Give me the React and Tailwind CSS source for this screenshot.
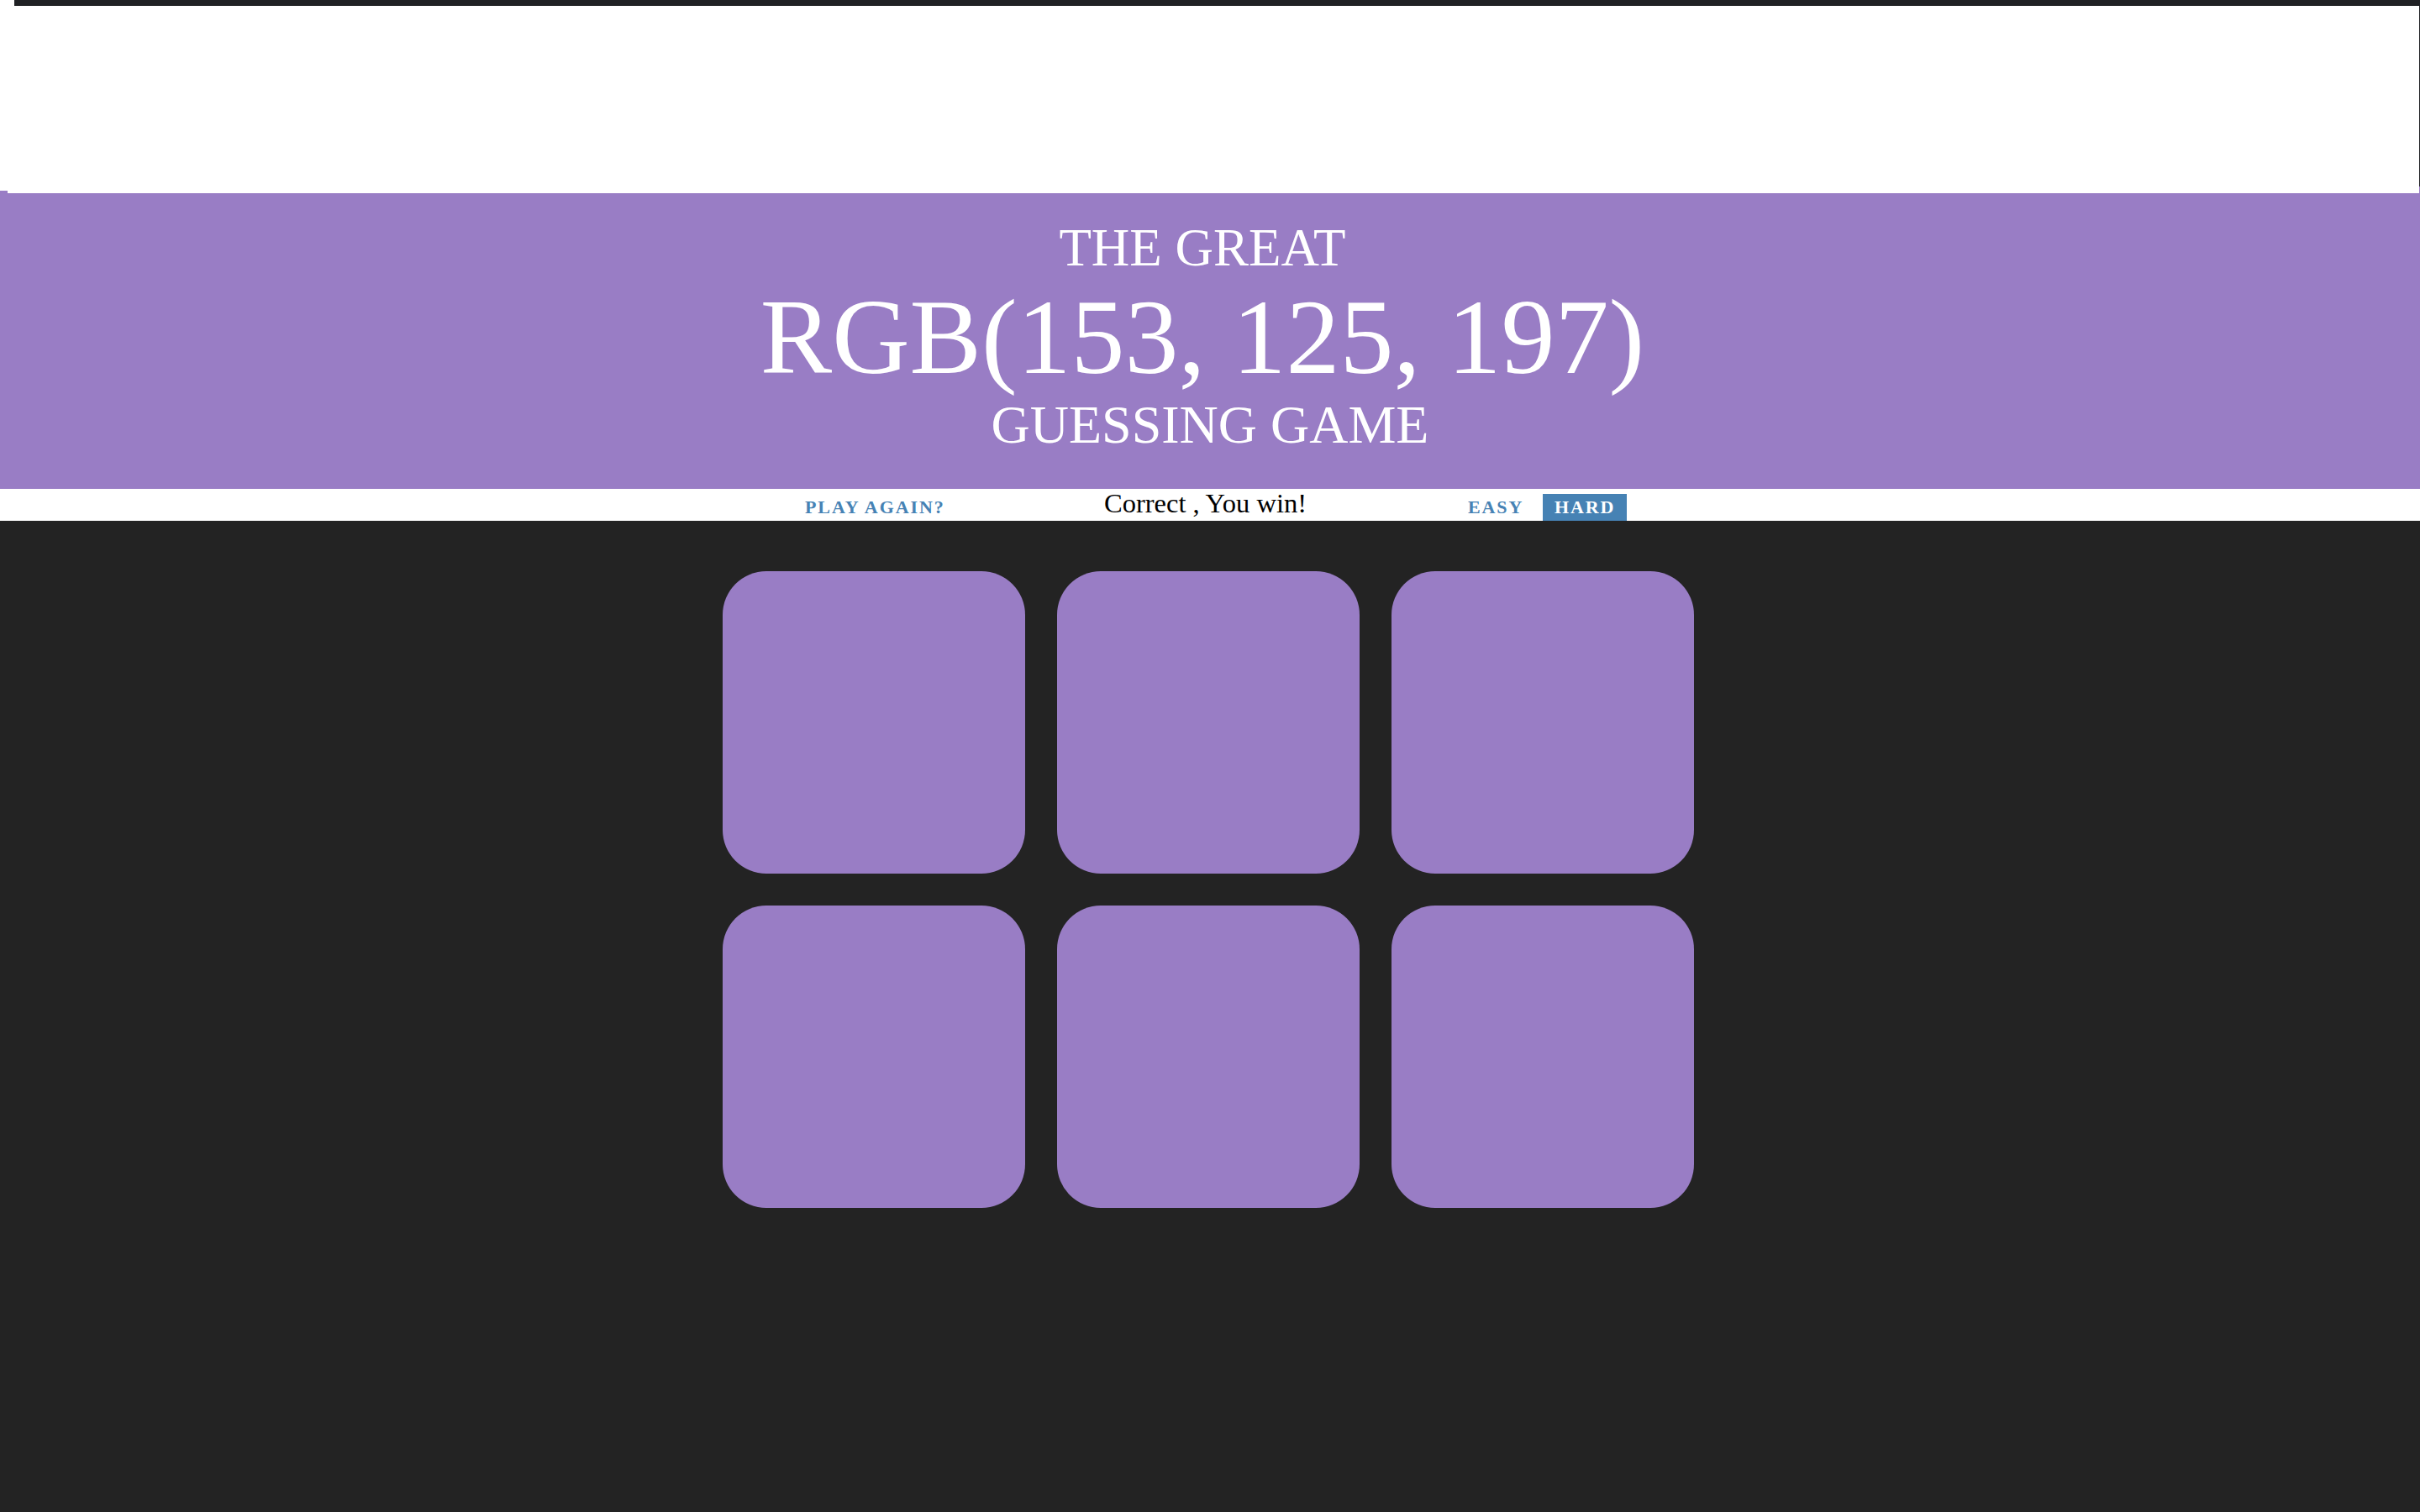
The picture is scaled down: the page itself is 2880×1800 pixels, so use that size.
export default function App() {

  const squares = [0, 1, 2, 3, 4, 5];

  return (

    <div className="min-h-screen bg-[#232323] font-['Liberation_Serif',serif]">

      {/* TOP STRIP */}
      <div className="flex h-[7px]">
        <div className="w-[17px] bg-white" />
        <div className="flex-1 bg-[#202124]" />
      </div>

      <div className="flex h-[223px]">
        <div className="flex flex-1 flex-col">
          <div className="flex-1 bg-white" />
          <div className="flex h-[3px]">
            <div className="w-[9px] bg-[#997dc5]" />
            <div className="flex-1 bg-white" />
          </div>
        </div>
        <div className="flex w-[1px] flex-col">
          <div className="h-[215px] bg-[#202124]" />
          <div className="flex-1 bg-[#997dc5]" />
        </div>
      </div>

      {/* HEADER */}
      <h1 className="bg-[#997dc5] pt-[25px] pb-[37px] text-center font-normal text-white">
        <div className="h-[80px] pr-[18px] text-[63px] leading-[80px]">THE GREAT</div>
        <div className="h-[132px] pr-[18px] text-[128px] leading-[132px]">RGB(153, 125, 197)</div>
        <div className="h-[78px] text-[64px] leading-[78px]">GUESSING GAME</div>
      </h1>

      {/* STRIPE */}
      <div className="flex h-[38px] justify-center bg-white">
        <div className="flex w-[992px] items-end">

          <button className="h-[32px] w-[196px] pl-[14px] text-left text-[22px] leading-[30px] font-bold tracking-[1.9px] text-[#4682b4] uppercase">
            Play Again?
          </button>

          <span className="mb-[3px] ml-[174px] w-[240px] whitespace-nowrap text-left text-[32.5px] leading-[35px] text-black">
            Correct , You win!
          </span>

          <button className="ml-[179px] h-[32px] w-[103px] pl-[14px] text-left text-[22px] leading-[30px] font-bold tracking-[1.9px] text-[#4682b4] uppercase">
            Easy
          </button>

          <button className="h-[32px] w-[100px] bg-[#4682b4] pl-[14px] text-left text-[22px] leading-[30px] font-bold tracking-[1.9px] text-white uppercase">
            Hard
          </button>

        </div>
      </div>

      {/* SQUARES */}
      <div className="flex justify-center pt-[60px] pr-[4px]">
        <div className="grid grid-cols-3 gap-[38px]">
          {squares.map((i) => (
            <div key={i} className="h-[360px] w-[360px] rounded-[52px] bg-[#997dc5]" />
          ))}
        </div>
      </div>

    </div>

  );

}
